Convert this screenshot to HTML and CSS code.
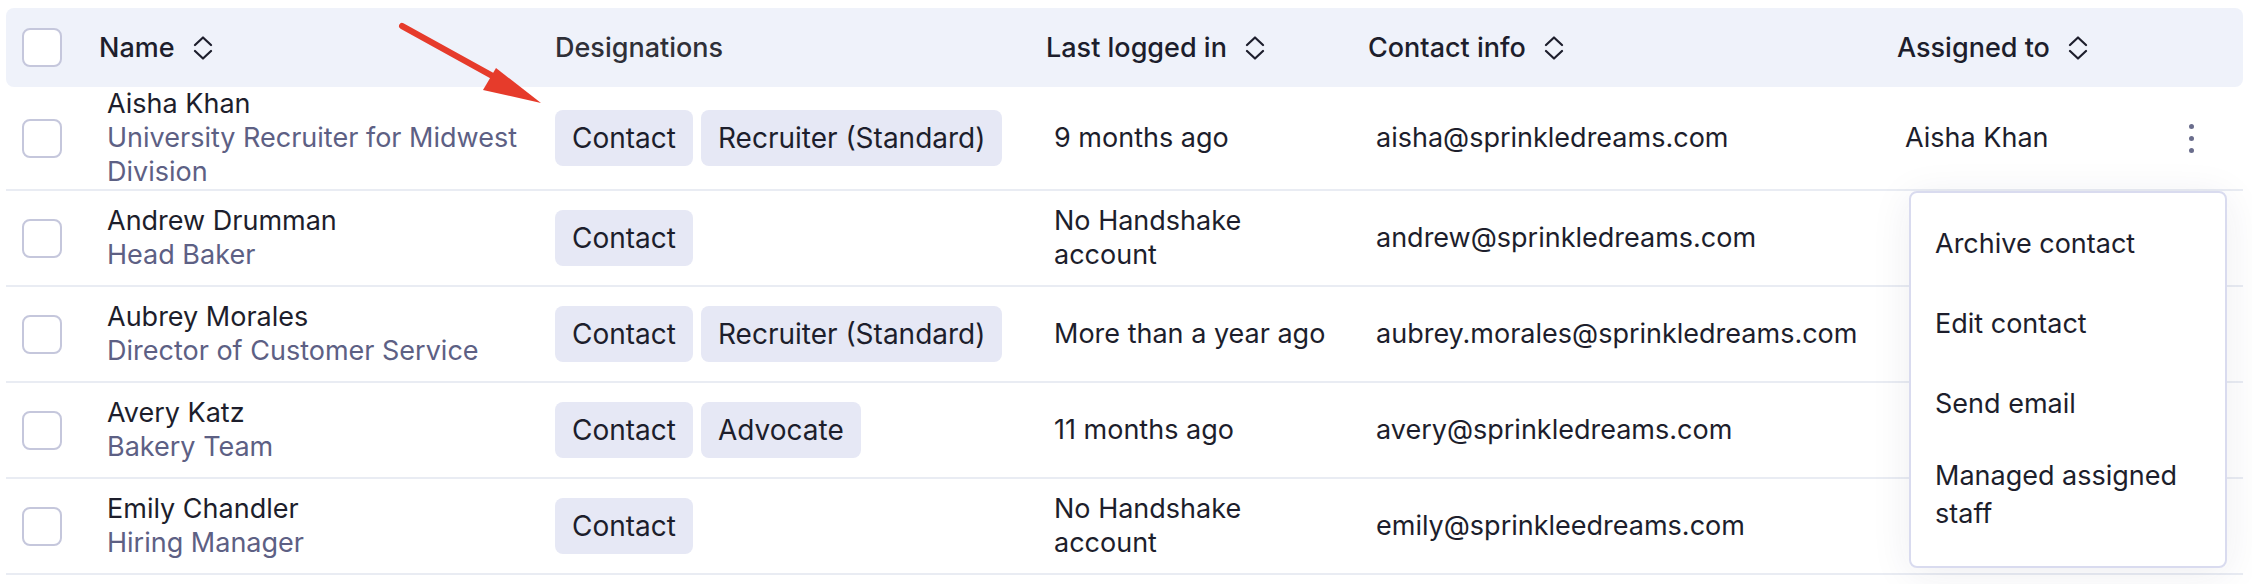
FILE: index.html
```html
<!DOCTYPE html>
<html lang="en">
<head>
  <meta charset="UTF-8" />
  <title>Contacts</title>
  <link rel="stylesheet" href="styles.css">
</head>
<body>
  <div id="contactsTable">
    <div class="row headRow">
      <div class="cell checkCell"><span class="checkbox"></span></div>
      <div class="cell headCell">Name <svg class="sortIcon" viewBox="0 0 20 24"><path d="M2 9 L10 1.5 L18 9 M2 15 L10 22.5 L18 15" /></svg></div>
      <div class="cell headCell plain">Designations</div>
      <div class="cell headCell">Last logged in <svg class="sortIcon" viewBox="0 0 20 24"><path d="M2 9 L10 1.5 L18 9 M2 15 L10 22.5 L18 15" /></svg></div>
      <div class="cell headCell">Contact info <svg class="sortIcon" viewBox="0 0 20 24"><path d="M2 9 L10 1.5 L18 9 M2 15 L10 22.5 L18 15" /></svg></div>
      <div class="cell headCell">Assigned to <svg class="sortIcon" viewBox="0 0 20 24"><path d="M2 9 L10 1.5 L18 9 M2 15 L10 22.5 L18 15" /></svg></div>
      <div class="cell"></div>
    </div>

    <div class="row">
      <div class="cell checkCell"><span class="checkbox"></span></div>
      <div class="cell textCell">
        <div class="personName">Aisha Khan</div>
        <div class="personTitle">University Recruiter for Midwest Division</div>
      </div>
      <div class="cell tagCell"><span class="tag">Contact</span><span class="tag">Recruiter (Standard)</span></div>
      <div class="cell textCell lastCell">9 months ago</div>
      <div class="cell textCell">aisha@sprinkledreams.com</div>
      <div class="cell textCell">Aisha Khan</div>
      <div class="cell actionCell">
        <button class="kebab" type="button"><span></span><span></span><span></span></button>
      </div>
    </div>

    <div class="row">
      <div class="cell checkCell"><span class="checkbox"></span></div>
      <div class="cell textCell">
        <div class="personName">Andrew Drumman</div>
        <div class="personTitle">Head Baker</div>
      </div>
      <div class="cell tagCell"><span class="tag">Contact</span></div>
      <div class="cell textCell lastCell">No Handshake account</div>
      <div class="cell textCell">andrew@sprinkledreams.com</div>
      <div class="cell textCell"></div>
      <div class="cell actionCell"></div>
    </div>

    <div class="row">
      <div class="cell checkCell"><span class="checkbox"></span></div>
      <div class="cell textCell">
        <div class="personName">Aubrey Morales</div>
        <div class="personTitle">Director of Customer Service</div>
      </div>
      <div class="cell tagCell"><span class="tag">Contact</span><span class="tag">Recruiter (Standard)</span></div>
      <div class="cell textCell lastCell">More than a year ago</div>
      <div class="cell textCell">aubrey.morales@sprinkledreams.com</div>
      <div class="cell textCell"></div>
      <div class="cell actionCell"></div>
    </div>

    <div class="row">
      <div class="cell checkCell"><span class="checkbox"></span></div>
      <div class="cell textCell">
        <div class="personName">Avery Katz</div>
        <div class="personTitle">Bakery Team</div>
      </div>
      <div class="cell tagCell"><span class="tag">Contact</span><span class="tag">Advocate</span></div>
      <div class="cell textCell lastCell">11 months ago</div>
      <div class="cell textCell">avery@sprinkledreams.com</div>
      <div class="cell textCell"></div>
      <div class="cell actionCell"></div>
    </div>

    <div class="row">
      <div class="cell checkCell"><span class="checkbox"></span></div>
      <div class="cell textCell">
        <div class="personName">Emily Chandler</div>
        <div class="personTitle">Hiring Manager</div>
      </div>
      <div class="cell tagCell"><span class="tag">Contact</span></div>
      <div class="cell textCell lastCell">No Handshake account</div>
      <div class="cell textCell">emily@sprinkleedreams.com</div>
      <div class="cell textCell"></div>
      <div class="cell actionCell"></div>
    </div>

    <ul id="rowMenu">
      <li>Archive contact</li>
      <li>Edit contact</li>
      <li>Send email</li>
      <li>Managed assigned staff</li>
    </ul>
  </div>

  <svg id="pointerArrow" viewBox="0 0 160 100">
    <line x1="4" y1="6" x2="100" y2="59" />
    <polygon points="143,83 85,70 98,48" />
  </svg>
</body>
</html>
```

FILE: styles.css
```css
* {
  box-sizing: border-box;
  margin: 0;
  padding: 0;
}

body {
  font-family: Inter, "Noto Sans", sans-serif;
  font-size: 27px;
  line-height: 34px;
  color: #1d1e2c;
  background: #fff;
  position: relative;
  height: 584px;
  overflow: hidden;
}

#contactsTable {
  position: relative;
  margin: 8px 9px 0 6px;
}

.row {
  display: grid;
  grid-template-columns: 93px 456px 491px 322px 529px 273px 1fr;
  min-height: 96px;
  border-bottom: 2px solid #e9ecf3;
}

.cell {
  display: flex;
  align-items: center;
}

.headRow {
  min-height: 79px;
  background: #eff2fa;
  border-radius: 8px;
  border-bottom: none;
}

.headCell {
  font-weight: 500;
  gap: 18px;
}

.headCell.plain {
  color: #2f3038;
}

.sortIcon {
  width: 20px;
  height: 24px;
  fill: none;
  stroke: #1d1e2c;
  stroke-width: 2.2;
  stroke-linecap: round;
  stroke-linejoin: round;
}

.checkCell {
  padding-left: 16px;
}

.checkbox {
  display: block;
  width: 40px;
  height: 39px;
  border: 2px solid #c5c7dc;
  border-radius: 8px;
  background: #fff;
}

.textCell {
  padding-left: 8px;
  padding-right: 30px;
}

.textCell:has(.personName) {
  flex-direction: column;
  align-items: flex-start;
  justify-content: center;
}

.personTitle {
  color: #5d6084;
}

.tagCell {
  gap: 8px;
}

.tag {
  font-size: 28px;
  background: #e6e8f5;
  border-radius: 8px;
  padding: 11px 17px;
}

.actionCell {
  padding-left: 17px;
}

.kebab {
  display: flex;
  flex-direction: column;
  gap: 7px;
  background: none;
  border: none;
  padding: 2px;
}

.kebab span {
  width: 5px;
  height: 5px;
  border-radius: 50%;
  background: #6a6d8c;
}

#rowMenu {
  list-style: none;
  position: absolute;
  left: 1903px;
  top: 183px;
  width: 318px;
  background: #fff;
  border: 2px solid #d9dbef;
  border-radius: 8px;
  padding: 11px 0 20px;
  box-shadow: 0 6px 40px rgba(40, 44, 80, 0.08);
}

#rowMenu li {
  min-height: 80px;
  display: flex;
  align-items: center;
  padding: 13px 24px;
  line-height: 38px;
}

#pointerArrow {
  position: absolute;
  left: 398px;
  top: 20px;
  width: 160px;
  height: 100px;
}

#pointerArrow line {
  stroke: #e63b2b;
  stroke-width: 6;
  stroke-linecap: round;
}

#pointerArrow polygon {
  fill: #e63b2b;
}
```
